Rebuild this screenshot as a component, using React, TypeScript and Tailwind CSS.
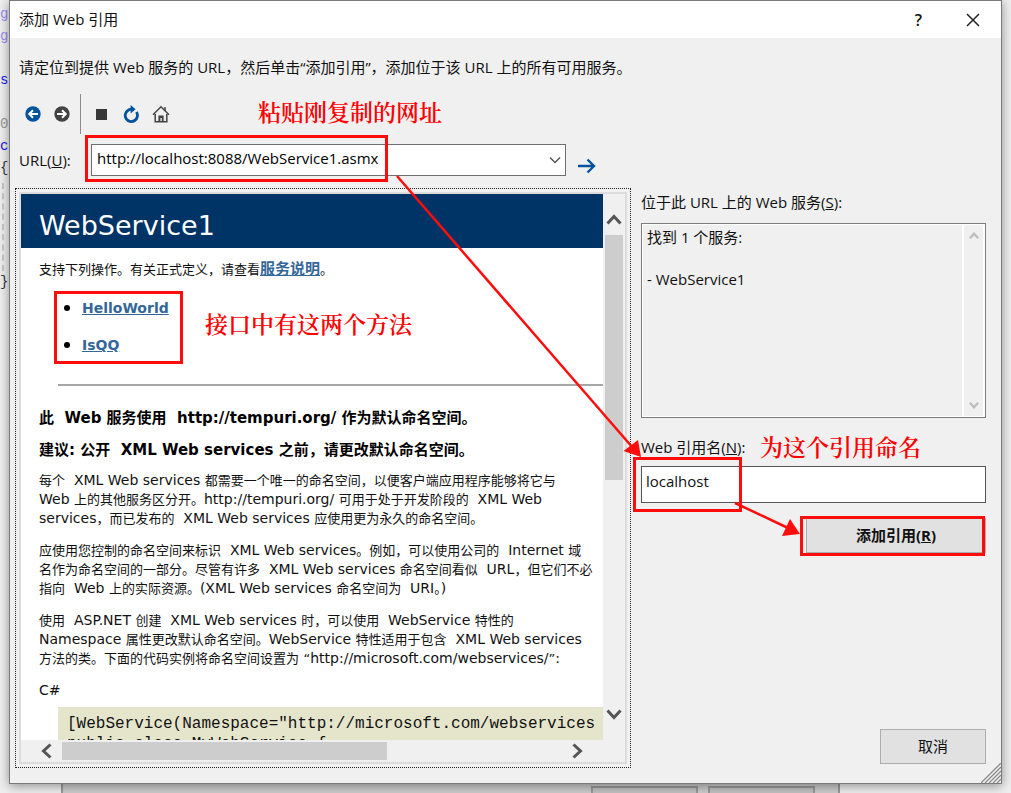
const editorLines = [
  { text: "g", color: "text-[#9a8cf0]" },
  { text: "g", color: "text-[#9a8cf0]" },
  { text: "", color: "" },
  { text: "s", color: "text-[#1414ff]" },
  { text: "", color: "" },
  { text: "0", color: "text-[#9a9a9a]" },
  { text: "c", color: "text-[#1414ff]" },
  { text: "{", color: "text-[#333333]" },
];

const operations = ["HelloWorld", "IsQQ"];

const paragraphs = [
  [
    "每个 \u00a0XML Web services 都需要一个唯一的命名空间，以便客户端应用程序能够将它与",
    "Web 上的其他服务区分开。http://tempuri.org/ 可用于处于开发阶段的 \u00a0XML Web",
    "services，而已发布的 \u00a0XML Web services 应使用更为永久的命名空间。",
  ],
  [
    "应使用您控制的命名空间来标识 \u00a0XML Web services。例如，可以使用公司的 \u00a0Internet 域",
    "名作为命名空间的一部分。尽管有许多 \u00a0XML Web services 命名空间看似 \u00a0URL，但它们不必",
    "指向 \u00a0Web 上的实际资源。(XML Web services 命名空间为 \u00a0URI。)",
  ],
  [
    "使用 \u00a0ASP.NET 创建 \u00a0XML Web services 时，可以使用 \u00a0WebService 特性的",
    "Namespace 属性更改默认命名空间。WebService 特性适用于包含 \u00a0XML Web services",
    "方法的类。下面的代码实例将命名空间设置为 “http://microsoft.com/webservices/”:",
  ],
];

function Chevron({ className, d }: { className: string; d: string }) {
  return (
    <svg
      viewBox="0 0 16 16"
      fill="none"
      stroke="currentColor"
      className={className}
      aria-hidden="true"
    >
      <path d={d} />
    </svg>
  );
}

function Note({ className, children }: { className: string; children: string }) {
  return (
    <span
      className={`pointer-events-none absolute z-10 whitespace-nowrap font-['Noto_Serif_CJK_SC','Noto_Sans_CJK_SC',serif] text-[23px] font-semibold leading-7 text-[#ff0000] ${className}`}
    >
      {children}
    </span>
  );
}

function Frame({ className }: { className: string }) {
  return (
    <span
      className={`pointer-events-none absolute z-10 border-[3px] border-[#ff0d0d] ${className}`}
    />
  );
}

// Latin words run one size larger than the Chinese text around them
function MixedLine({ text }: { text: string }) {
  return (
    <span className="block h-[19px]">
      {text.split(/([\u0020-\u007e\u00a0]+)/).map((part, index) =>
        index % 2 === 1 ? (
          <span key={index} className="text-sm leading-[19px]">
            {part}
          </span>
        ) : (
          part
        ),
      )}
    </span>
  );
}

function Toolbar() {
  return (
    <div className="relative mt-[15px] flex h-10 items-center pl-[10px]">
      <button type="button" aria-label="后退">
        <svg viewBox="0 0 16 16" className="size-4">
          <circle cx="8" cy="8" r="7.7" fill="#00539c" />
          <path
            d="M13 8H4.5M8 4.2 4.2 8 8 11.8"
            fill="none"
            stroke="#fff"
            strokeWidth="2"
          />
        </svg>
      </button>
      <button type="button" aria-label="前进" className="ml-[13px]">
        <svg viewBox="0 0 16 16" className="size-4">
          <circle cx="8" cy="8" r="7.7" fill="#424242" />
          <path
            d="M3 8h8.5M8 4.2 11.8 8 8 11.8"
            fill="none"
            stroke="#fff"
            strokeWidth="2"
          />
        </svg>
      </button>
      <span className="ml-[10px] h-10 w-px bg-[#8c8c8c]" />
      <button type="button" aria-label="停止" className="ml-[15px]">
        <span className="block size-[11px] bg-[#383838]" />
      </button>
      <button type="button" aria-label="刷新" className="ml-4">
        <svg viewBox="0 0 17 18" className="h-[18px] w-[17px]">
          <path
            d="M13.4 7A6.1 6.1 0 1 1 5.2 5.2Q6.6 4.2 9 4.2"
            fill="none"
            stroke="#00539c"
            strokeWidth="2.8"
          />
          <path d="M7.6 0 12.6 4.2 7.6 8.6Z" fill="#00539c" />
        </svg>
      </button>
      <button type="button" aria-label="主页" className="ml-3">
        <svg viewBox="0 0 18 18" className="size-[18px]" fill="none" stroke="#424242">
          <path d="M1 9.8 9 1.8l8 8" strokeWidth="1.4" />
          <path d="M3.2 9v7.8h11.6V9M13 2v4" strokeWidth="1.5" />
          <path d="M6.4 17v-6.5h5.2V17h-1.8v-4H8.4v4Z" fill="#424242" stroke="none" />
        </svg>
      </button>
      <Note className="left-[243px] top-1">粘贴刚复制的网址</Note>
    </div>
  );
}

function UrlRow() {
  return (
    <div className="mt-[10px] flex h-8 items-center pl-1">
      <label htmlFor="url" className="w-[72px]">
        URL(<u>U</u>):
      </label>
      <div className="relative h-8 w-[475px]">
        <select
          id="url"
          className="size-full appearance-none border border-[#6e6e6e] bg-white pl-[5px] pb-1 text-black outline-none"
        >
          <option>http://localhost:8088/WebService1.asmx</option>
        </select>
        <Chevron
          className="pointer-events-none absolute right-[3px] top-2 size-4 stroke-[1.5] text-[#555555]"
          d="M3 5.5l5 5 5-5"
        />
        <Frame className="-left-[6px] -top-[9px] h-[47px] w-[303px]" />
      </div>
      <button type="button" aria-label="转到" className="ml-3 mt-3">
        <svg viewBox="0 0 18 16" className="h-4 w-[18px]" fill="none" stroke="#00539c">
          <path d="M0 8h16M9.5 1.5 16 8l-6.5 6.5" strokeWidth="2.4" />
        </svg>
      </button>
    </div>
  );
}

function WebPage() {
  return (
    <div className="relative min-w-0 flex-1 overflow-hidden whitespace-nowrap bg-white font-['DejaVu_Sans','Noto_Sans_CJK_SC',sans-serif] text-[13px] leading-[19px] text-[#111111]">
      <h1 className="h-[54px] bg-[#003366] pl-[18px] pt-[9px] text-[27px] leading-[46px] text-white">
        WebService1
      </h1>
      <div className="pl-[18px]">
        <p className="mt-3 h-[19px]">
          支持下列操作。有关正式定义，请查看
          <a
            href="#description"
            className="text-[15px] font-bold leading-[19px] text-[#336699] underline"
          >
            服务说明
          </a>
          。
        </p>
        <div className="relative mt-3 h-[73px]">
          <ul className="flex list-disc flex-col gap-[18px] pl-[43px] pt-[2px] text-sm leading-[19px]">
            {operations.map((name) => (
              <li key={name} className="h-[19px] marker:text-lg marker:text-black">
                <a href={`#${name}`} className="font-bold text-[#336699] underline">
                  {name}
                </a>
              </li>
            ))}
          </ul>
          <Frame className="left-[15px] top-0 h-[73px] w-[129px]" />
          <Note className="left-[166px] top-[19px]">接口中有这两个方法</Note>
        </div>
        <hr className="ml-[19px] mt-5 border-t-2 border-[#a6a6a6]" />
        <h3 className="mt-5 text-[15px] font-bold leading-6 text-black">
          此 &nbsp;Web 服务使用 &nbsp;http://tempuri.org/ 作为默认命名空间。
        </h3>
        <h3 className="mt-2 text-[15px] font-bold leading-6 text-black">
          建议: 公开 &nbsp;XML Web services 之前，请更改默认命名空间。
        </h3>
        <div className="mt-[9px] flex flex-col gap-[13px]">
          {paragraphs.map((lines) => (
            <p key={lines[0]}>
              {lines.map((line) => (
                <MixedLine key={line} text={line} />
              ))}
            </p>
          ))}
        </div>
        <p className="mt-[13px] text-sm leading-[19px]">C#</p>
        <pre className="ml-[19px] mt-[7px] h-20 bg-[#e5e5cc] pl-[9px] pt-[7px] font-['Liberation_Mono',monospace] text-base leading-5 text-[#111111]">
          {'[WebService(Namespace="http://microsoft.com/webservices\npublic class MyWebService {'}
        </pre>
      </div>
    </div>
  );
}

function Browser() {
  return (
    <div className="flex min-h-0 min-w-0 flex-1 flex-col border border-dotted border-[#222222] p-[3px]">
      <div className="flex min-h-0 flex-1 flex-col border-2 border-[#dcdcdc]">
        <div className="flex min-h-0 flex-1">
          <WebPage />
          <div className="flex w-[22px] flex-col items-center bg-[#f0f0f0]">
            <Chevron className="mt-[18px] size-4 stroke-[3] text-[#555555]" d="M1.5 11.5 8 4.5l6.5 7" />
            <span className="mt-[7px] h-[245px] w-[18px] bg-[#cdcdcd]" />
            <Chevron className="mb-[18px] mt-auto size-4 stroke-[3] text-[#555555]" d="M1.5 4.5 8 11.5l6.5-7" />
          </div>
        </div>
        <div className="flex h-[22px] items-center bg-[#f0f0f0] pl-[18px] pr-10">
          <Chevron className="size-4 stroke-[3] text-[#555555]" d="M11.5 1.5 4.5 8l7 6.5" />
          <span className="ml-[7px] h-[18px] w-[325px] bg-[#cdcdcd]" />
          <Chevron className="ml-auto size-4 stroke-[3] text-[#555555]" d="M4.5 1.5 11.5 8l-7 6.5" />
        </div>
      </div>
    </div>
  );
}

function Sidebar() {
  return (
    <div className="flex w-[345px] shrink-0 flex-col">
      <label htmlFor="services" className="leading-7">
        位于此 URL 上的 Web 服务(<u>S</u>):
      </label>
      <div className="relative mt-[7px] h-[195px] border border-[#7e7e7e] ring-1 ring-inset ring-white">
        <textarea
          id="services"
          readOnly
          className="block size-full resize-none overflow-hidden bg-transparent pl-[5px] pt-[3px] leading-[21px] outline-none"
          value={"找到 1 个服务:\n\n- WebService1"}
        />
        <div className="absolute inset-y-0 right-0 flex w-[23px] flex-col items-center justify-between border-x-2 border-white py-[6px] text-[#bdbdbd]">
          <Chevron className="size-3 stroke-[3]" d="M2.5 11 8 5l5.5 6" />
          <Chevron className="size-3 stroke-[3]" d="M2.5 5 8 11l5.5-6" />
        </div>
      </div>
      <div className="relative mt-[17px] h-6 leading-6">
        <label htmlFor="reference">
          Web 引用名(<u>N</u>):
        </label>
        <Note className="left-[119px] -top-[2px]">为这个引用命名</Note>
      </div>
      <div className="relative mt-[7px] h-[37px]">
        <input
          id="reference"
          defaultValue="localhost"
          className="size-full border border-[#555555] bg-white pb-2 pl-1 outline-none"
        />
        <Frame className="-left-[8px] -top-[9px] h-[55px] w-[109px]" />
      </div>
      <div className="relative mt-[15px] h-[35px] w-[180px] self-end">
        <button
          type="button"
          className="size-full border border-[#adadad] bg-[#e1e1e1] font-bold"
        >
          添加引用(<u>R</u>)
        </button>
        <Frame className="-left-[6px] -top-[2px] h-[40px] w-[185px]" />
      </div>
      <button
        type="button"
        className="mb-1 mt-auto h-[35px] w-[106px] self-end border border-[#adadad] bg-[#e1e1e1]"
      >
        取消
      </button>
    </div>
  );
}

function Dialog() {
  return (
    <div
      role="dialog"
      aria-label="添加 Web 引用"
      className="relative flex min-w-0 flex-1 flex-col border border-[#7a7a7a] bg-[#f0f0f0] shadow-[0_2px_10px_rgba(0,0,0,0.4)]"
    >
      <header className="flex h-[37px] shrink-0 items-center bg-white pl-[9px] pr-[21px]">
        <span className="mr-auto">添加 Web 引用</span>
        <button type="button" aria-label="帮助" className="text-base font-semibold">
          ?
        </button>
        <button type="button" aria-label="关闭" className="ml-[44px]">
          <svg viewBox="0 0 14 14" className="size-[14px]" stroke="#222" strokeWidth="1.5">
            <path d="M1 1l12 12M13 1L1 13" />
          </svg>
        </button>
      </header>
      <div className="flex min-h-0 flex-1 flex-col pb-[15px] pl-[5px] pr-[15px]">
        <p className="mt-[17px] pl-1 leading-6">
          请定位到提供 Web 服务的 URL，然后单击“添加引用”，添加位于该 URL 上的所有可用服务。
        </p>
        <Toolbar />
        <UrlRow />
        <div className="mt-3 flex min-h-0 flex-1 gap-[10px]">
          <Browser />
          <Sidebar />
        </div>
      </div>
      <svg
        viewBox="0 0 20 20"
        className="absolute bottom-0 right-0 size-5"
        stroke="#8a8a8a"
        strokeWidth="1.3"
        aria-hidden="true"
      >
        <path d="M0 20 20 0M4 20 20 4M8 20 20 8M12 20 20 12M16 20l4-4" />
      </svg>
    </div>
  );
}

export default function App() {
  return (
    <div className="relative flex h-screen flex-col overflow-hidden bg-[#eeeeee] font-['Open_Sans','Noto_Sans_CJK_SC',sans-serif] text-[15px] text-[#111111]">
      <div className="flex min-h-0 flex-1">
        <div className="flex w-[9px] shrink-0 flex-col items-start pt-[3px] font-['Liberation_Mono',monospace] text-sm leading-[22px]">
          {editorLines.map((line, index) => (
            <span key={index} className={`h-[22px] ${line.color}`}>
              {line.text}
            </span>
          ))}
          <span className="ml-[2px] mt-1 h-[88px] border-l-2 border-dashed border-[#c8c8c8]" />
          <span className="text-[#333333]">{"}"}</span>
        </div>
        <Dialog />
        <div className="w-[9px] shrink-0" />
      </div>
      <div className="flex h-[9px] shrink-0 pl-[61px] pr-[171px]">
        <div className="flex flex-1 justify-end gap-[10px] border-x-2 border-[#9a9a9a] bg-[#cccccc] pr-[23px] pt-[2px]">
          <span className="w-[107px] border-x-2 border-t-2 border-[#9a9a9a] bg-[#c2c2c2]" />
          <span className="w-[107px] border-x-2 border-t-2 border-[#9a9a9a] bg-[#c2c2c2]" />
        </div>
      </div>
      <svg
        className="pointer-events-none absolute inset-0 z-20 size-full"
        stroke="#ff0d0d"
        fill="#ff0d0d"
        aria-hidden="true"
      >
        <path d="M397 176 633 448" strokeWidth="2.5" />
        <path d="M641 457 623.5 451 638 440Z" stroke="none" />
        <path d="M735 503 788 528" strokeWidth="2.5" />
        <path d="M800 534 782 536 790 519Z" stroke="none" />
      </svg>
    </div>
  );
}
